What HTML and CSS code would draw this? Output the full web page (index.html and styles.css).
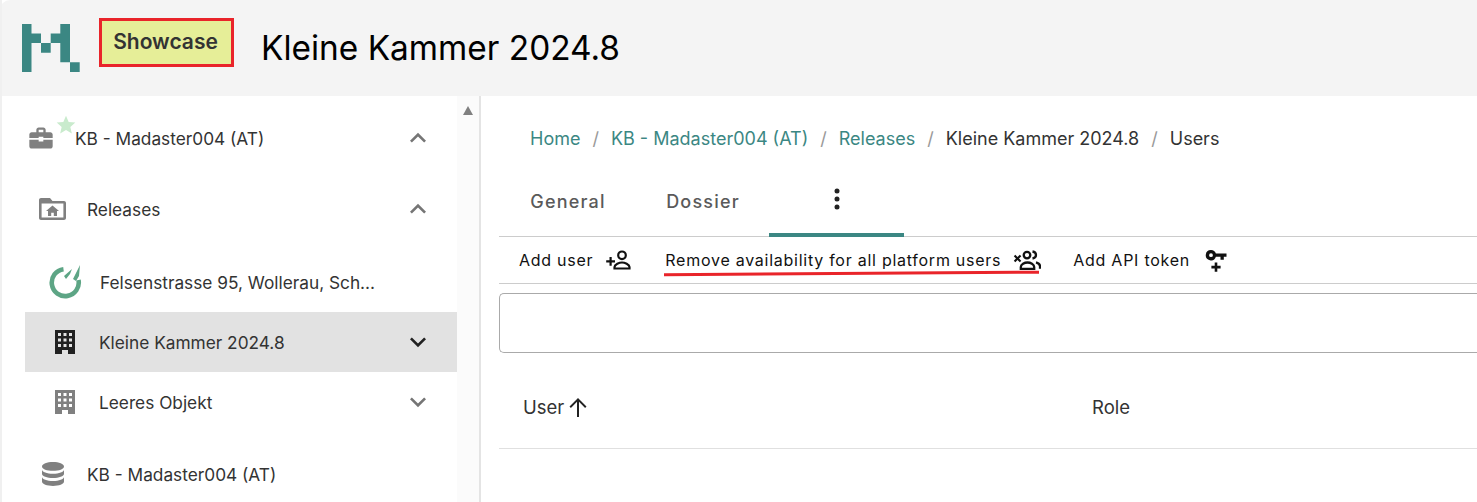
FILE: index.html
```html
<!DOCTYPE html>
<html lang="en">
<head>
<meta charset="utf-8">
<title>Kleine Kammer 2024.8</title>
<link rel="stylesheet" href="styles.css">
</head>
<body>
<div class="app">
  <header class="header">
    <svg class="logo" viewBox="0 0 58 48" aria-hidden="true"><path fill="#3b8783" d="M0 0h9.500v9.500h9.500v9.500h9.700v9.800h-9.700v-9.800h-9.500v29h-9.500zM38.300 0h9.700v38.300h9.700v9.700h-9.700v-9.700h-9.700v-19.300h-9.600v-9.500h9.600z"/></svg>
    <div class="badge">Showcase</div>
    <h1 class="title">Kleine Kammer 2024.8</h1>
  </header>
  <div class="body">
    <aside class="sidebar">
      <nav class="tree">
        <div class="row row-org">
          <span class="org-icon">
            <svg class="ic-24 grey" viewBox="0 0 24 24"><path d="M20 7h-4V5c0-1.100-.9-2-2-2h-4c-1.100 0-2 .9-2 2v2H4c-1.100 0-2 .9-2 2v3h8v-1h4v1h8V9c0-1.100-.9-2-2-2zm-6 0h-4V5h4v2zM14 15h-4v-1.500H2V19c0 1.100.9 2 2 2h16c1.100 0 2-.9 2-2v-5.500h-8V15z"/></svg>
            <svg class="star" viewBox="0 0 24 24"><path fill="#c9ebcd" d="M12 1l3.200 7.400 8 .7-6 5.300 1.800 7.900L12 18.100l-7 4.200 1.800-7.900-6-5.300 8-.7z"/></svg>
          </span>
          <span class="label">KB - Madaster004 (AT)</span>
          <svg class="chev" viewBox="0 0 24 24"><path d="M7.400 15.400 12 10.800l4.600 4.600L18 14l-6-6-6 6z"/></svg>
        </div>
        <div class="row row-l1 row-releases">
          <svg class="ic-l1 grey" viewBox="0 0 27 22"><path fill-rule="evenodd" d="M2 0h9l2.500 3H25c1.100 0 2 .9 2 2v15c0 1.100-.9 2-2 2H2c-1.100 0-2-.9-2-2V2C0 .9.900 0 2 0zm.6 5.500V19.400h21.800V5.500zM13.500 7.500l6.500 5.500h-2v5h-3.200v-3.300h-2.600V18H9v-5H7z"/></svg>
          <span class="label">Releases</span>
          <svg class="chev" viewBox="0 0 24 24"><path d="M7.400 15.400 12 10.800l4.600 4.600L18 14l-6-6-6 6z"/></svg>
        </div>
        <div class="row row-felsen">
          <svg class="ic-progress" viewBox="0 0 34 34"><path fill="none" stroke="#5da585" stroke-width="4.600" d="M14.500 4.200A13.500 13.500 0 1 0 29.500 15"/><path fill="#5da585" d="M15 11l8-7-2 5-4 5zM24 14l7-14-1 11-3 5z"/></svg>
          <span class="label">Felsenstrasse 95, Wollerau, Sch...</span>
        </div>
        <div class="row row-active">
          <svg class="ic-building dark" viewBox="0 0 20 24"><path fill-rule="evenodd" d="M0 0h20v24h-7v-4H7v4H0zM3 3v3h3V3zm5.500 0v3h3V3zM14 3v3h3V3zM3 8.500v3h3v-3zm5.500 0v3h3v-3zm5.500 0v3h3v-3zM3 14v3h3v-3zm5.500 0v3h3v-3zm5.500 0v3h3v-3z"/></svg>
          <span class="label">Kleine Kammer 2024.8</span>
          <svg class="chev dark" viewBox="0 0 24 24"><path d="M7.400 8.600 12 13.200l4.600-4.600L18 10l-6 6-6-6z"/></svg>
        </div>
        <div class="row row-leeres">
          <svg class="ic-building grey" viewBox="0 0 20 24"><path fill-rule="evenodd" d="M0 0h20v24h-7v-4H7v4H0zM3 3v3h3V3zm5.500 0v3h3V3zM14 3v3h3V3zM3 8.500v3h3v-3zm5.500 0v3h3v-3zm5.500 0v3h3v-3zM3 14v3h3v-3zm5.500 0v3h3v-3zm5.500 0v3h3v-3z"/></svg>
          <span class="label">Leeres Objekt</span>
          <svg class="chev" viewBox="0 0 24 24"><path d="M7.400 8.600 12 13.200l4.600-4.600L18 10l-6 6-6-6z"/></svg>
        </div>
        <div class="row row-l1 row-db">
          <svg class="ic-db grey" viewBox="0 0 22 24"><path d="M11 0C5 0 0 1.900 0 4.400s5 4.400 11 4.400 11-1.900 11-4.400S17 0 11 0zM0 7.400v4.300c0 2.500 5 4.300 11 4.300s11-1.800 11-4.300V7.400c0 2.500-5 4.300-11 4.300S0 9.900 0 7.400zm0 7.300v4.900C0 22.100 5 24 11 24s11-1.900 11-4.400v-4.900c0 2.500-5 4.300-11 4.300S0 17.200 0 14.700z"/></svg>
          <span class="label">KB - Madaster004 (AT)</span>
        </div>
      </nav>
      <div class="scrolltrack"><span class="scrollarrow"></span></div>
    </aside>
    <main class="main">
      <ol class="crumbs">
        <li class="crumb link">Home</li><li class="sep">/</li>
        <li class="crumb link">KB - Madaster004 (AT)</li><li class="sep">/</li>
        <li class="crumb link">Releases</li><li class="sep">/</li>
        <li class="crumb">Kleine Kammer 2024.8</li><li class="sep">/</li>
        <li class="crumb">Users</li>
      </ol>
      <div class="tabs">
        <div class="tab tab-general">General</div>
        <div class="tab tab-dossier">Dossier</div>
        <div class="tab tab-more"><svg class="dots" viewBox="0 0 6 22"><circle cx="3" cy="3" r="2.500"/><circle cx="3" cy="11" r="2.500"/><circle cx="3" cy="19" r="2.500"/></svg></div>
      </div>
      <div class="toolbar">
        <div class="action act-add">
          <span>Add user</span>
          <svg class="act-icon" viewBox="0 0 26 20"><path d="M3.500 6.900h2.200v3.300H9v2.200H5.700v3.300H3.500v-3.300H.2v-2.200h3.300z"/><path fill="none" stroke="#111" stroke-width="2.200" d="M16 1.500a3.800 3.800 0 1 1 0 7.600a3.800 3.800 0 1 1 0-7.600zM8.500 18.500v-1.500c0-2.500 5-4.500 7.500-4.500s7.500 2 7.500 4.500v1.500z"/></svg>
        </div>
        <div class="action act-remove">
          <span>Remove availability for all platform users</span>
          <svg class="act-icon" viewBox="0 0 28 20"><path d="M.8 6.200l1.500-1.500L4.500 7l2.300-2.300 1.500 1.500-2.300 2.300 2.300 2.300-1.500 1.500-2.300-2.300-2.200 2.300-1.500-1.500 2.200-2.300z"/><path fill="none" stroke="#111" stroke-width="2.300" d="M14 1.800a3.300 3.300 0 1 1 0 6.600a3.300 3.300 0 1 1 0-6.600zM7.800 18.800v-1.800c0-2.500 3.700-4.500 6.700-4.500s6.700 2 6.700 4.500v1.800zM19.500 1.500c2.400.4 3.500 2 3.500 3.500s-1.100 3.100-3.500 3.500M23 12.300c2.500.7 4 2.200 4 4v2.500"/></svg>
        </div>
        <div class="action act-token">
          <span>Add API token</span>
          <svg class="act-icon" viewBox="0 0 22 24"><path fill-rule="evenodd" d="M6 2a5.200 5.200 0 0 1 4.900 3.500H21.500v3.300h-2.700v3H15.500v-3h-4.600A5.200 5.200 0 1 1 6 2zm0 3.300a1.900 1.900 0 1 0 0 3.800 1.900 1.900 0 0 0 0-3.800z"/><path d="M9.700 14.500h2.600v3.300h3.300v2.600h-3.300v3.300H9.700v-3.300H6.400v-2.600h3.300z"/></svg>
        </div>
        <span class="annotation-line"></span>
      </div>
      <div class="searchbox"></div>
      <div class="table-head">
        <div class="th th-user">User <svg class="arrow-up" viewBox="0 0 20 20"><path d="M10 1 1.500 9.500l1.400 1.400L9 4.800V20h2V4.800l6.100 6.100 1.400-1.400z"/></svg></div>
        <div class="th th-role">Role</div>
      </div>
    </main>
  </div>
</div>
</body>
</html>
```
FILE: styles.css
```css
* { box-sizing: border-box; }
html, body { margin: 0; padding: 0; height: 100%; overflow: hidden; background: #fff; }
body { font-family: Inter, "Liberation Sans", sans-serif; color: #333; font-size: 16px; }
.app { width: 1477px; height: 502px; display: flex; flex-direction: column; overflow: hidden; border-left: 2px solid #f0f0f0; }

.header { height: 96px; flex: none; background: #f4f4f4; display: flex; align-items: flex-start; margin-left: -2px; padding: 24px 0 0 22px; border-top-left-radius: 10px; }
.logo { width: 58px; height: 48px; flex: none; }
.badge { width: 135px; height: 49px; flex: none; margin: -6px 0 0 19px; background: #e6ee98; border: 3px solid #e9242a; display: flex; align-items: center; justify-content: center; font-size: 21px; font-weight: 600; color: #333; padding: 0 2px 2px 0; }
.title { margin: 0 0 0 27px; font-size: 33.400px; font-weight: 400; line-height: 48px; color: #000; }

.body { flex: 1; display: flex; min-height: 0; }
.sidebar { width: 479px; flex: none; display: flex; border-right: 2px solid #e4e4e4; }
.tree { width: 455px; flex: none; display: flex; flex-direction: column; }
.scrolltrack { flex: 1; background: #fbfbfb; display: flex; justify-content: center; padding-top: 10px; }
.scrollarrow { width: 0; height: 0; border-left: 5.500px solid transparent; border-right: 5.500px solid transparent; border-bottom: 9px solid #808080; }

.row { display: flex; align-items: center; height: 60px; color: #333; font-size: 17.280px; }
.label { flex: 1; white-space: nowrap; }
.grey { fill: #808080; }
.dark { fill: #212121; }
.chev { width: 32px; height: 32px; flex: none; fill: #757575; margin-right: 23px; }
.chev.dark { fill: #212121; }

.row-org { height: 60px; margin-top: 12px; padding-left: 25px; }
.org-icon { width: 48px; height: 40px; flex: none; display: flex; align-items: center; position: relative; }
.ic-24 { width: 28px; height: 28px; }
.star { position: absolute; left: 29px; top: -3px; width: 20px; height: 20px; }
.row-l1 { padding-left: 37px; }
.row-releases { margin-top: 11px; }
.ic-l1 { width: 27px; height: 22px; flex: none; margin-right: 21px; }
.row-felsen { height: 60px; margin-top: 13px; padding-left: 47px; }
.ic-progress { width: 34px; height: 34px; flex: none; margin-right: 17px; }
.row-active { background: #e2e2e2; margin-left: 23px; padding-left: 30px; }
.row-leeres { margin-left: 23px; padding-left: 30px; }
.ic-building { width: 20px; height: 24px; flex: none; margin-right: 24px; }
.row-db { height: 50px; margin-top: 17px; padding-left: 40px; }
.ic-db { width: 22px; height: 24px; flex: none; margin-right: 23px; }

.main { flex: 1; min-width: 0; padding-left: 18px; }
.crumbs { list-style: none; margin: 0; padding: 31px 0 0 31px; height: 74px; display: flex; gap: 12px; line-height: 24px; color: #333; font-size: 18px; }
.crumb.link { color: #3b8783; }
.sep { color: #999; }

.tabs { display: flex; height: 67px; border-bottom: 1px solid #ccc; align-items: stretch; }
.tab { display: flex; align-items: center; justify-content: center; font-size: 18px; font-weight: 500; color: #5a5a5a; letter-spacing: 1.200px; padding: 0 0 4px 2px; }
.tab-general { width: 136px; }
.tab-dossier { width: 134px; }
.tab-more { width: 135px; border-bottom: 4px solid #3b8783; padding: 0 0 6px; margin-bottom: -1px; }
.dots { width: 6px; height: 22px; fill: #222; }

.toolbar { display: flex; height: 47px; align-items: center; border-bottom: 1px solid #ccc; position: relative; color: #111; font-size: 16px; letter-spacing: 0.740px; }
.action { display: flex; align-items: center; white-space: nowrap; }
.act-icon { fill: #111; flex: none; }
.act-add { margin-left: 20px; }
.act-add .act-icon { width: 26px; height: 20px; margin-left: 13px; }
.act-remove { margin-left: 33px; }
.act-remove .act-icon { width: 28px; height: 20px; margin-left: 12px; }
.act-token { margin-left: 32px; }
.act-token .act-icon { width: 22px; height: 24px; margin-left: 15px; }
.annotation-line { position: absolute; left: 165px; top: 35px; width: 375px; height: 3px; background: #e9242a; transform: rotate(-0.4deg); }

.searchbox { height: 60px; margin-top: 9px; border: 1px solid #aaa; border-right: 0; border-radius: 5px 0 0 5px; }
.table-head { display: flex; height: 96px; align-items: center; padding-top: 13px; border-bottom: 1px solid #e0e0e0; font-size: 18.500px; color: #333; }
.th { display: flex; align-items: center; }
.th-user { width: 593px; padding-left: 24px; gap: 4px; }
.arrow-up { width: 20px; height: 20px; fill: #222; }
```
